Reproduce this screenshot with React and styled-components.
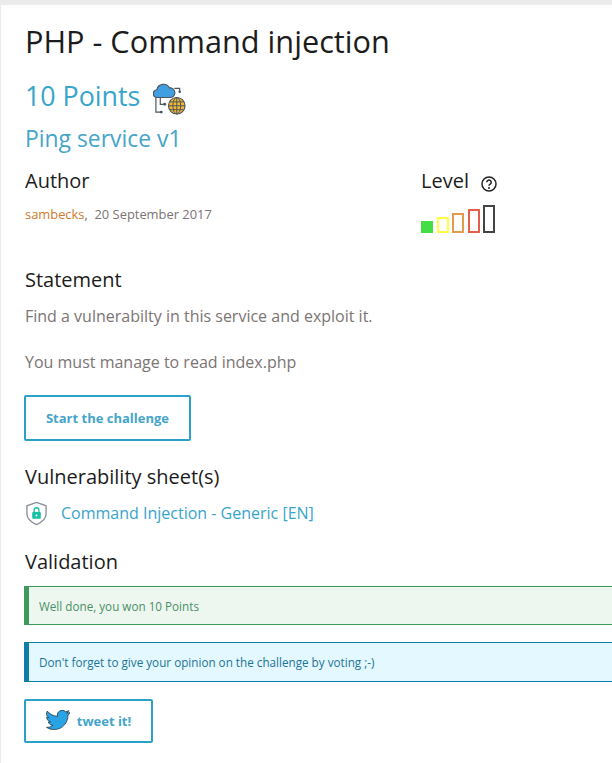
import React from "react";
import styled, { createGlobalStyle } from "styled-components";

const Global = createGlobalStyle`
  html, body { margin: 0; padding: 0; background: #ebebeb; overflow: hidden; }
  body { font-family: "Open Sans", sans-serif; }
`;

const Page = styled.main`
  margin: 5px 0 0 1px;
  width: 611px;
  height: 758px;
  background: #fff;
  padding: 0 0 0 24px;
  box-sizing: border-box;
  overflow: hidden;
  display: flex;
  flex-direction: column;
`;

const Title = styled.h1`
  margin: 14px 0 0;
  font-size: 30.7px;
  line-height: 44px;
  font-weight: 400;
  color: #1c1c1c;
  white-space: nowrap;
`;

const PointsRow = styled.div`
  display: flex;
  align-items: center;
  gap: 13px;
  margin-top: 11px;
  height: 44px;
  flex: none;
`;

const Points = styled.span`
  font-size: 26.8px;
  line-height: 36px;
  color: #38a5cb;
`;

const IconSlot = styled.span`
  display: flex;
  margin-top: ${(p) => p.$mt}px;
`;

const Subtitle = styled.h2`
  margin: 4px 0 0;
  font-size: 22.9px;
  line-height: 34px;
  font-weight: 400;
  color: #45a5c9;
`;

const Columns = styled.div`
  display: grid;
  grid-template-columns: 396px 1fr;
  margin-top: 11px;
  height: 79px;
  flex: none;
`;

const Heading = styled.h3`
  margin: 0;
  font-size: 20px;
  line-height: 28px;
  font-weight: 400;
  color: #1c1c1c;
  display: flex;
  align-items: center;
  gap: 11px;
`;

const Byline = styled.p`
  margin: 10px 0 0;
  font-size: 12.9px;
  line-height: 18px;
  color: #7b7474;
`;

const AuthorName = styled.span`
  color: #d07a2c;
`;

const Bars = styled.div`
  display: flex;
  align-items: flex-end;
  gap: 3.5px;
  margin-top: 10px;
  height: 28px;
`;

const Bar = styled.span`
  box-sizing: border-box;
  width: 12px;
  height: ${(p) => p.$h}px;
  border: 2px solid ${(p) => p.$c};
  background: ${(p) => (p.$fill ? p.$c : "transparent")};
`;

const Section = styled.section`
  margin-top: ${(p) => p.$mt || 0}px;
  flex: none;
`;

const Text = styled.p`
  margin: ${(p) => p.$mt || 0}px 0 0;
  font-size: 16px;
  line-height: 24px;
  color: #7b7474;
`;

const Outline = styled.a`
  box-sizing: border-box;
  display: inline-flex;
  align-items: center;
  justify-content: center;
  gap: 7px;
  margin-left: -1px;
  height: ${(p) => p.$h}px;
  width: ${(p) => p.$w}px;
  border: 2px solid #2aa2c8;
  border-radius: 2px;
  font-size: 13px;
  font-weight: 700;
  color: #45a5c9;
`;

const SheetRow = styled.div`
  display: flex;
  align-items: center;
  gap: 13px;
  margin-top: 7px;
  height: 30px;
`;

const SheetLink = styled.a`
  font-size: 16px;
  color: #38a5cb;
`;

const Alert = styled.div`
  box-sizing: border-box;
  display: flex;
  align-items: center;
  flex: none;
  height: ${(p) => p.$h}px;
  margin: ${(p) => p.$mt}px 0 0 -1px;
  padding-left: 10px;
  border-left: 5px solid ${(p) => p.$line};
  border-top: 1px solid ${(p) => p.$line};
  border-bottom: 1px solid ${(p) => p.$line};
  background: ${(p) => p.$bg};
  color: ${(p) => p.$fg};
  font-size: 11.7px;
`;

const CloudIcon = () => (
  <svg width="33" height="33" viewBox="0 0 34 34" fill="none">
    <path d="M4.500 16a4 4 0 0 1-.5-8a7 7 0 0 1 13-2a5 5 0 0 1 1 10z" fill="#3f9fe0" stroke="#4a5560" strokeWidth="1.200" />
    <path d="M22 6.500h5.500V10M3 16v15h5M7.500 16v7H11" stroke="#4a5560" strokeWidth="1.200" />
    <circle cx="27.500" cy="10" r="1.300" fill="#4a5560" />
    <circle cx="8.500" cy="31" r="1.500" fill="#4a5560" />
    <circle cx="12" cy="23" r="1.500" fill="#4a5560" />
    <circle cx="24.500" cy="24.500" r="8.500" fill="#f2b632" stroke="#4a5560" strokeWidth="1.200" />
    <path d="M16 24.500h17M17.500 20.500h14M17.500 28.500h14M24.500 16v17" stroke="#4a5560" strokeWidth="1" />
    <ellipse cx="24.500" cy="24.500" rx="4" ry="8.500" stroke="#4a5560" strokeWidth="1" />
  </svg>
);

const HelpIcon = () => (
  <svg width="18" height="18" viewBox="0 0 18 18" fill="none">
    <circle cx="9" cy="9" r="7" stroke="#222" strokeWidth="1.500" />
    <path d="M6.800 7.200a2.200 2.200 0 1 1 3.400 1.900c-.8.500-1.200.9-1.200 1.700" stroke="#222" strokeWidth="1.500" />
    <circle cx="9" cy="13" r="1" fill="#222" />
  </svg>
);

const ShieldIcon = () => (
  <svg width="23" height="25" viewBox="0 0 24 26" fill="none">
    <path d="M12 1.500l10 3.500v8c0 5-4 9-10 11.500C6 22 2 18 2 13V5z" fill="#fff" stroke="#8a919c" strokeWidth="1.400" />
    <rect x="7.500" y="11.500" width="9" height="7" rx="1" fill="#19bfa6" />
    <path d="M9.500 11.500V9.500a2.500 2.500 0 0 1 5 0v2" stroke="#19bfa6" strokeWidth="1.400" />
    <circle cx="12" cy="15" r="1" fill="#fff" />
  </svg>
);

const TwitterIcon = () => (
  <svg width="24" height="20" viewBox="0 0 24 20" fill="#29a3e3" stroke="#111" strokeWidth="0.600">
    <path d="M23.500 2.400c-.9.400-1.800.6-2.800.8 1-.6 1.800-1.500 2.100-2.700-.9.600-2 1-3.100 1.200A4.900 4.900 0 0 0 11.400 6.200 13.900 13.900 0 0 1 1.300 1.100a4.900 4.900 0 0 0 1.500 6.500c-.8 0-1.500-.2-2.200-.6 0 2.400 1.700 4.400 3.900 4.900-.7.200-1.500.2-2.200.1.600 2 2.400 3.400 4.600 3.400A9.900 9.900 0 0 1 .5 17.400a13.900 13.900 0 0 0 7.500 2.200c9.100 0 14.300-7.700 14-14.600 1-.7 1.800-1.600 2.500-2.600z" />
  </svg>
);

const levels = [
  { h: 12, c: "#44dd44", fill: true },
  { h: 16, c: "#ffff44" },
  { h: 20, c: "#e39a4a" },
  { h: 24, c: "#e5604a" },
  { h: 28, c: "#444444" },
];

export default function App() {
  return (
    <>
      <Global />
      <Page>
        <Title>PHP - Command injection</Title>
        <PointsRow>
          <Points>10 Points</Points>
          <IconSlot $mt={5}><CloudIcon /></IconSlot>
        </PointsRow>
        <Subtitle>Ping service v1</Subtitle>
        <Columns>
          <div>
            <Heading>Author</Heading>
            <Byline>
              <AuthorName>sambecks</AuthorName>,&nbsp; 20 September 2017
            </Byline>
          </div>
          <div>
            <Heading>
              Level <IconSlot $mt={5}><HelpIcon /></IconSlot>
            </Heading>
            <Bars>
              {levels.map((l) => (
                <Bar key={l.h} $h={l.h} $c={l.c} $fill={l.fill} />
              ))}
            </Bars>
          </div>
        </Columns>
        <Section $mt={20}>
          <Heading>Statement</Heading>
          <Text $mt={10}>Find a vulnerabilty in this service and exploit it.</Text>
          <Text $mt={22}>You must manage to read index.php</Text>
        </Section>
        <Section $mt={21}>
          <Outline $w={167} $h={46}>Start the challenge</Outline>
        </Section>
        <Section $mt={22}>
          <Heading>Vulnerability sheet(s)</Heading>
          <SheetRow>
            <ShieldIcon />
            <SheetLink>Command Injection - Generic [EN]</SheetLink>
          </SheetRow>
        </Section>
        <Section $mt={20}>
          <Heading>Validation</Heading>
        </Section>
        <Alert $h={39} $mt={10} $line="#3d9a5b" $bg="#edf7ef" $fg="#4b8f68">Well done, you won 10 Points</Alert>
        <Alert $h={40} $mt={17} $line="#0f7ea6" $bg="#e4f8ff" $fg="#1c7496">Don't forget to give your opinion on the challenge by voting ;-)</Alert>
        <Section $mt={17}>
          <Outline $w={129} $h={44}><IconSlot $mt={-2}><TwitterIcon /></IconSlot> tweet it!</Outline>
        </Section>
      </Page>
    </>
  );
}
